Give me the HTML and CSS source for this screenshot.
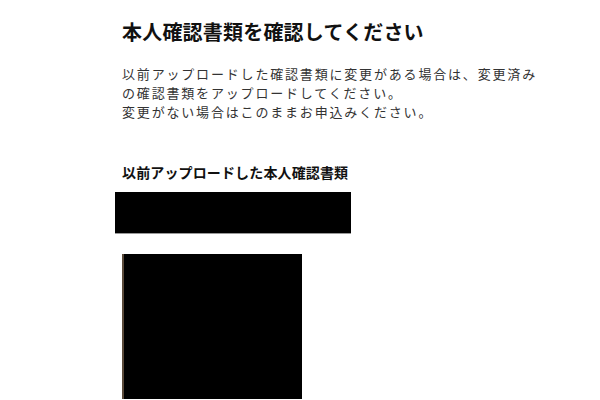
FILE: index.html
```html
<!DOCTYPE html>
<html lang="ja">
<head>
<meta charset="utf-8">
<link rel="stylesheet" href="styles.css">
</head>
<body>
<main class="page">
  <h1 class="title">本人確認書類を確認してください</h1>
  <p class="lead">以前アップロードした確認書類に変更がある場合は、変更済み<br>の確認書類をアップロードしてください。<br>変更がない場合はこのままお申込みください。</p>
  <h2 class="subtitle">以前アップロードした本人確認書類</h2>
  <div class="doc doc-wide"></div>
  <div class="doc doc-photo"></div>
</main>
</body>
</html>
```
FILE: styles.css
```css
html, body {
  margin: 0;
  padding: 0;
  background: #fff;
  overflow: hidden;
  height: 400px;
}
body {
  font-family: "Noto Sans CJK JP", "Noto Sans", sans-serif;
  color: #222;
}
.page {
  padding: 17px 0 0 122px;
  display: flex;
  flex-direction: column;
  align-items: flex-start;
}
.title {
  margin: 0;
  font-size: 20px;
  line-height: 30px;
  font-weight: 700;
  letter-spacing: 0.01em;
  color: #111;
}
.lead {
  margin: 17px 0 0;
  font-size: 13px;
  line-height: 19px;
  letter-spacing: 0.14em;
  color: #333;
  white-space: nowrap;
}
.subtitle {
  margin: 41px 0 0;
  font-size: 14px;
  line-height: 20px;
  font-weight: 700;
  letter-spacing: 0.01em;
  color: #111;
}
.doc {
  background: #000;
}
.doc-wide {
  margin: 10px 0 0 -7px;
  width: 236px;
  height: 41px;
  border-bottom: 1px solid #999;
}
.doc-photo {
  margin: 20px 0 0 0;
  width: 178px;
  height: 145px;
  border-left: 2px solid #5a4a3a;
}
```
